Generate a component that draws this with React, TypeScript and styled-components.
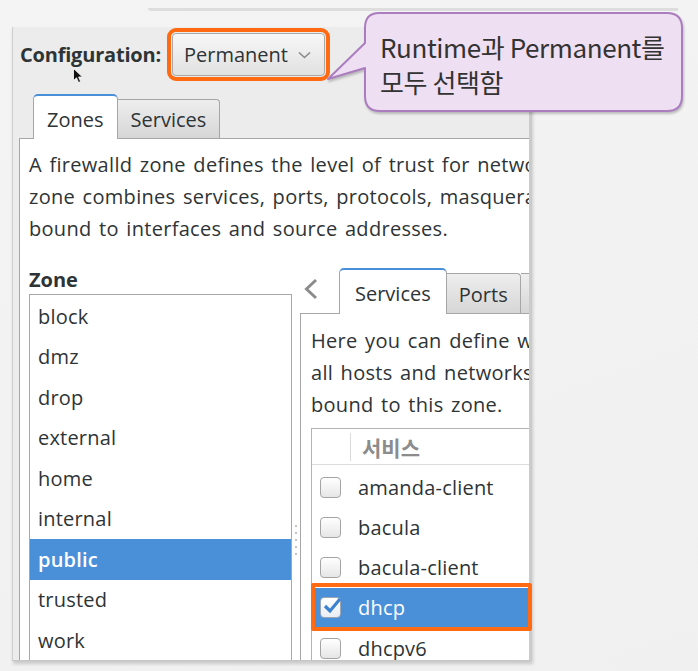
import React from "react";
import styled, { createGlobalStyle } from "styled-components";

const UI_FONT = `"Open Sans", "Noto Sans CJK KR", sans-serif`;

const Global = createGlobalStyle`
  html, body {
    margin: 0;
    padding: 0;
    background: #f2f2f2;
  }
  body {
    width: 698px;
    height: 671px;
    overflow: hidden;
    font-family: ${UI_FONT};
    color: #2e3436;
  }
`;

const Stage = styled.div`
  position: relative;
  width: 698px;
  height: 671px;
  overflow: hidden;
  background: linear-gradient(160deg, #f4f4f4 0%, #f0f0f0 100%);
`;

const TopEdge = styled.div`
  margin: 8px 0 0 148px;
  width: 530px;
  height: 3px;
  background: #dddddd;
  border-bottom-left-radius: 3px;
`;

const Window = styled.div`
  margin: 16px 0 0 12px;
  width: 520px;
  height: 634px;
  box-sizing: border-box;
  background: #ececec;
  border-left: 1px solid #cfcfcf;
  border-right: 3px solid #cbcbcb;
  border-bottom: 1px solid #c6c6c6;
  box-shadow: 1px 3px 3px rgba(0, 0, 0, 0.16);
  overflow: hidden;
`;

const Header = styled.div`
  display: flex;
  align-items: center;
  gap: 11px;
  padding: 6px 0 0 7px;
`;

const ConfigLabel = styled.span`
  font-size: 20px;
  font-weight: 700;
  letter-spacing: -0.2px;
  color: #2e3436;
`;

const Combo = styled.div`
  display: flex;
  align-items: center;
  justify-content: space-between;
  box-sizing: border-box;
  width: 153px;
  height: 43px;
  padding: 0 13px 0 11px;
  border: 1px solid #a8a8a8;
  border-radius: 4px;
  background: linear-gradient(#f7f7f7, #e1e1e1);
  font-size: 20px;
  color: #2e3436;
  outline: 4px solid #ff6a13;
  outline-offset: 1px;
`;

const Notebook = styled.div<{ $width: number }>`
  display: flex;
  flex-direction: column;
  width: ${(p) => p.$width}px;
`;

const OuterNotebook = styled(Notebook)`
  margin: 18px 0 0 6px;
`;

const TabStrip = styled.div<{ $height: number; $pad: number }>`
  display: flex;
  align-items: flex-end;
  height: ${(p) => p.$height}px;
  padding-left: ${(p) => p.$pad}px;
`;

const Tab = styled.div<{ $active?: boolean; $h: number; $padX: number }>`
  position: relative;
  z-index: 1;
  display: flex;
  align-items: center;
  box-sizing: border-box;
  height: ${(p) => p.$h}px;
  font-size: 20px;
  color: #2e3436;
  border: 1px solid #a6a6a6;
  border-bottom: none;
  padding: ${(p) => (p.$active ? 3 : 1)}px ${(p) => p.$padX}px 0;
  ${(p) =>
    p.$active
      ? `
    margin-bottom: -1px;
    background: #ffffff;
    border-top: 2px solid #4a90d9;
    border-radius: 5px 5px 0 0;
  `
      : `
    border-left: none;
    background: linear-gradient(#eeeeee, #d6d6d6);
    border-radius: 0 4px 0 0;
  `}
`;

const Page = styled.div<{ $pad: string }>`
  flex: 1;
  border-top: 1px solid #a6a6a6;
  border-left: 1px solid #a6a6a6;
  background: #ffffff;
  padding: ${(p) => p.$pad};
  height: 600px;
`;

const Description = styled.div`
  font-size: 20px;
  line-height: 32px;
  letter-spacing: 0.3px;
  word-spacing: 2px;
  white-space: nowrap;
  color: #2e3436;
`;

const ZoneArea = styled.div`
  display: flex;
  margin-top: 21px;
`;

const ZoneColumn = styled.div`
  display: flex;
  flex-direction: column;
  width: 263px;
`;

const SectionLabel = styled.div`
  font-size: 20px;
  font-weight: 700;
  line-height: 28px;
  color: #2e3436;
`;

const ListBox = styled.div`
  box-sizing: border-box;
  height: 400px;
  border: 1px solid #a8a8a8;
  background: #ffffff;
  padding-top: 1px;
`;

const ZoneRow = styled.div<{ $selected?: boolean }>`
  display: flex;
  align-items: center;
  height: 40.5px;
  padding-left: 8px;
  font-size: 20px;
  letter-spacing: 0.2px;
  font-weight: ${(p) => (p.$selected ? 600 : 400)};
  background: ${(p) => (p.$selected ? "#4a90d9" : "transparent")};
  color: ${(p) => (p.$selected ? "#ffffff" : "#2e3436")};
`;

const Handle = styled.div`
  display: flex;
  flex-direction: column;
  align-items: center;
  gap: 5px;
  width: 8px;
  padding-top: 259px;
`;

const Dot = styled.span`
  width: 2px;
  height: 2px;
  border-radius: 1px;
  background: #b4b0a8;
`;

const RightPane = styled.div`
  padding-top: 2px;
`;

const ScrollArrow = styled.div`
  align-self: center;
  width: 39px;
  padding: 0 0 4px 3px;
  box-sizing: border-box;
  display: flex;
`;

const TreeView = styled.div`
  margin-top: 7px;
  width: 320px;
  height: 300px;
  border: 1px solid #b3b3b3;
  background: #ffffff;
`;

const TreeHeader = styled.div`
  display: flex;
  align-items: center;
  height: 35px;
  border-bottom: 1px solid #dcdcdc;
`;

const HeaderCheckCell = styled.div`
  width: 38px;
  height: 28px;
  border-right: 1px solid #dadada;
`;

const HeaderLabel = styled.div`
  padding-left: 11px;
  font-size: 21px;
  font-weight: 700;
  color: #8c8c8c;
`;

const TreeBody = styled.div`
  padding-top: 2px;
`;

const ServiceRow = styled.div<{ $selected?: boolean }>`
  display: flex;
  align-items: center;
  height: 40.25px;
  padding-left: 8px;
  font-size: 20px;
  letter-spacing: 0.2px;
  background: ${(p) => (p.$selected ? "#4a90d9" : "transparent")};
  color: ${(p) => (p.$selected ? "#ffffff" : "#2e3436")};
`;

const CheckBox = styled.span<{ $checked?: boolean }>`
  position: relative;
  display: inline-block;
  box-sizing: border-box;
  width: 21px;
  height: 21px;
  margin-right: 17px;
  border: 1px solid ${(p) => (p.$checked ? "#9aa6b4" : "#a4a4a4")};
  border-radius: 4px;
  background: ${(p) =>
    p.$checked ? "linear-gradient(#ffffff, #e9eef4)" : "linear-gradient(#ffffff, #e6e6e6)"};
  & > svg {
    position: absolute;
    left: 0px;
    top: -3px;
  }
`;

const Callout = styled.div`
  position: absolute;
  left: 327px;
  top: 10px;
  width: 362px;
  height: 108px;
  & > svg {
    position: absolute;
    left: 0;
    top: 0;
    filter: drop-shadow(1px 2px 1px rgba(0, 0, 0, 0.22));
  }
`;

const CalloutText = styled.div`
  position: absolute;
  left: 53px;
  top: 19px;
  font-family: "Noto Sans CJK KR", "Open Sans", sans-serif;
  font-size: 26px;
  line-height: 35px;
  color: #333333;
  white-space: nowrap;
  letter-spacing: -0.4px;
`;

const Highlight = styled.div`
  position: absolute;
  left: 311px;
  top: 583px;
  width: 221px;
  height: 48px;
  box-sizing: border-box;
  border: 4px solid #ff6a13;
  border-radius: 2px;
`;

const Cursor = styled.svg`
  position: absolute;
  left: 73px;
  top: 68px;
`;

const zones = ["block", "dmz", "drop", "external", "home", "internal", "public", "trusted", "work"];
const services = ["amanda-client", "bacula", "bacula-client", "dhcp", "dhcpv6"];

const Chevron = () => (
  <svg width="13" height="8" viewBox="0 0 13 8">
    <path d="M1 1.5 L6.5 6.5 L12 1.5" fill="none" stroke="#8a8a8a" strokeWidth="1.6" />
  </svg>
);

const LeftArrow = () => (
  <svg width="16" height="22" viewBox="0 0 16 22">
    <path d="M13 2 L3.5 11 L13 20" fill="none" stroke="#8c8c8c" strokeWidth="3" strokeLinejoin="miter" />
  </svg>
);

const CheckMark = () => (
  <svg width="22" height="22" viewBox="0 0 22 22">
    <path d="M4 11 L9 16 L19 4" fill="none" stroke="#3d82d0" strokeWidth="3.2" />
  </svg>
);

export default function App() {
  return (
    <>
      <Global />
      <Stage>
        <TopEdge />
        <Window>
          <Header>
            <ConfigLabel>Configuration:</ConfigLabel>
            <Combo>
              <span>Permanent</span>
              <Chevron />
            </Combo>
          </Header>

          <OuterNotebook $width={720}>
            <TabStrip $height={44} $pad={14}>
              <Tab $active $h={45} $padX={13}>Zones</Tab>
              <Tab $h={39} $padX={13}>Services</Tab>
            </TabStrip>
            <Page $pad="10px 0 0 9px">
              <Description>
                A firewalld zone defines the level of trust for network connections, interfaces and source addresses bound to the zone. The
                <br />
                zone combines services, ports, protocols, masquerading, port/packet forwarding, icmp filters and rich rules. The zone can be
                <br />
                bound to interfaces and source addresses.
              </Description>

              <ZoneArea>
                <ZoneColumn>
                  <SectionLabel>Zone</SectionLabel>
                  <ListBox>
                    {zones.map((z) => (
                      <ZoneRow key={z} $selected={z === "public"}>
                        {z}
                      </ZoneRow>
                    ))}
                  </ListBox>
                </ZoneColumn>

                <Handle>
                  <Dot />
                  <Dot />
                  <Dot />
                  <Dot />
                  <Dot />
                </Handle>

                <RightPane>
                  <Notebook $width={420}>
                    <TabStrip $height={45} $pad={0}>
                      <ScrollArrow>
                        <LeftArrow />
                      </ScrollArrow>
                      <Tab $active $h={46} $padX={15}>Services</Tab>
                      <Tab $h={40} $padX={12}>Ports</Tab>
                      <Tab $h={40} $padX={12}>Protocols</Tab>
                    </TabStrip>
                    <Page $pad="11px 0 0 10px">
                      <Description>
                        Here you can define which services are trusted in the zone. Trusted services are accessible from
                        <br />
                        all hosts and networks that can reach the machine from connections, interfaces and sources
                        <br />
                        bound to this zone.
                      </Description>
                      <TreeView>
                        <TreeHeader>
                          <HeaderCheckCell />
                          <HeaderLabel>서비스</HeaderLabel>
                        </TreeHeader>
                        <TreeBody>
                          {services.map((s) => (
                            <ServiceRow key={s} $selected={s === "dhcp"}>
                              <CheckBox $checked={s === "dhcp"}>{s === "dhcp" && <CheckMark />}</CheckBox>
                              {s}
                            </ServiceRow>
                          ))}
                        </TreeBody>
                      </TreeView>
                    </Page>
                  </Notebook>
                </RightPane>
              </ZoneArea>
            </Page>
          </OuterNotebook>
        </Window>

        <Callout>
          <svg width="362" height="108" viewBox="0 0 362 108">
            <path
              d="M52 3 H340 Q355 3 355 18 V86 Q355 101 340 101 H53 Q38 101 38 86 V58 L1 69 L38 33 V18 Q38 3 52 3 Z"
              fill="#efdff2"
              stroke="#ab7dbf"
              strokeWidth="2"
              strokeLinejoin="round"
            />
          </svg>
          <CalloutText>
            Runtime과 Permanent를
            <br />
            모두 선택함
          </CalloutText>
        </Callout>

        <Highlight />

        <Cursor width="11" height="16" viewBox="0 0 11 16">
          <path d="M0.5 0.5 L0.5 12.5 L3.5 9.8 L5.6 14.5 L7.6 13.6 L5.6 9 L9.5 9 Z" fill="#111" stroke="#fff" strokeWidth="0.8" />
        </Cursor>
      </Stage>
    </>
  );
}
